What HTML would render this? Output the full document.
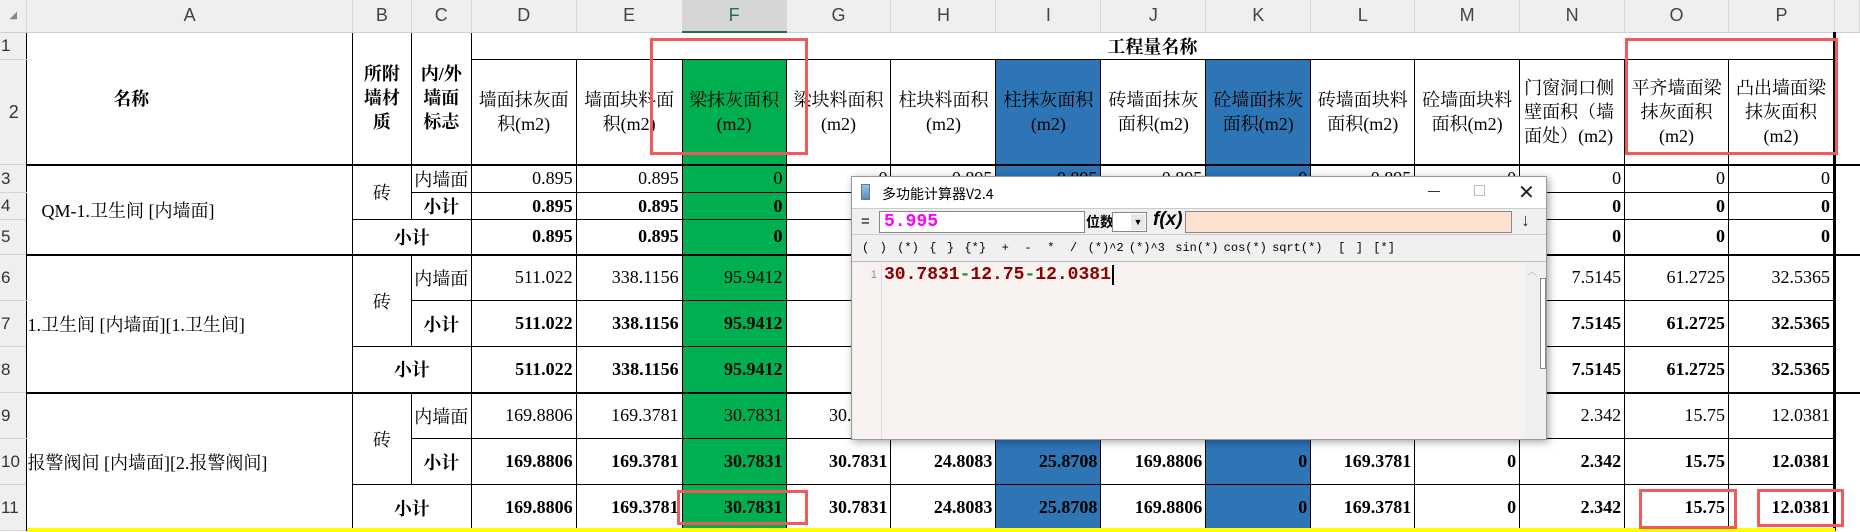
<!DOCTYPE html>
<html><head><meta charset="utf-8"><style>
*{box-sizing:border-box;margin:0;padding:0}
body{width:1860px;height:532px;overflow:hidden;background:#fff;position:relative;font-family:"Liberation Serif","Noto Serif CJK SC",serif;}
table{position:absolute;left:0;top:0;border-collapse:collapse;table-layout:fixed;}
td{border:1px solid #000;font-size:18px;text-align:right;padding:0 3px;white-space:nowrap;overflow:hidden;color:#000;}
td.rh{background:#efefef;color:#333;text-align:left;font-family:"Liberation Sans",sans-serif;font-size:17px;border:none;border-bottom:1px solid #d4d4d4;padding:0 0 0 1px;font-weight:normal}
tr.ch td{background:#efefef;color:#444;text-align:center;font-family:"Liberation Sans",sans-serif;font-size:18px;border:none;border-right:1px solid #d8d8d8;border-bottom:1px solid #d0d0d0}
tr.ch td.sel{background:#d6d6d6;border-bottom:2px solid #217346;color:#217346}
.c{text-align:center}.l{text-align:left}.b{font-weight:bold}
.g{background:#00b050}.bl{background:#2e75b6}
.hd td{text-align:center;white-space:nowrap;font-size:18px;line-height:24px}
.tb td{border-bottom:2px solid #000}
.red{position:absolute;border:3px solid #f05a5a}
#calc{position:absolute;left:851px;top:176px;width:696px;height:264px;background:#f0f0f0;border:1px solid #999;box-shadow:2px 2px 8px rgba(0,0,0,.35);font-family:"Liberation Sans","Noto Sans CJK SC",sans-serif}
.e{border:none;border-left:3px solid #000}
</style></head><body>
<table>
<colgroup><col style="width:27px"><col style="width:326px"><col style="width:59px"><col style="width:60px"><col style="width:105px"><col style="width:106px"><col style="width:104px"><col style="width:105px"><col style="width:105px"><col style="width:105px"><col style="width:105px"><col style="width:105px"><col style="width:104px"><col style="width:105px"><col style="width:105px"><col style="width:104px"><col style="width:106px"><col style="width:25px"></colgroup>
<tr class="ch" style="height:32px"><td style="font-size:10px;color:#888">◢</td><td>A</td><td>B</td><td>C</td><td>D</td><td>E</td><td class="sel">F</td><td>G</td><td>H</td><td>I</td><td>J</td><td>K</td><td>L</td><td>M</td><td>N</td><td>O</td><td>P</td><td></td></tr>
<tr style="height:26px"><td class="rh">1</td><td rowspan="2" class="c b" style="border-bottom:2px solid #000;padding-right:120px">名称</td><td rowspan="2" class="c b" style="line-height:24px;border-bottom:2px solid #000;padding:0">所附<br>墙材<br>质</td><td rowspan="2" class="c b" style="line-height:24px;border-bottom:2px solid #000;padding:0">内/外<br>墙面<br>标志</td><td colspan="13" class="c b">工程量名称</td><td class="e"></td></tr>
<tr class="hd tb" style="height:105px"><td class="rh" style="border-bottom:1px solid #d4d4d4">2</td><td>墙面抹灰面<br>积(m2)</td><td>墙面块料面<br>积(m2)</td><td class="g">梁抹灰面积<br>(m2)</td><td>梁块料面积<br>(m2)</td><td>柱块料面积<br>(m2)</td><td class="bl">柱抹灰面积<br>(m2)</td><td>砖墙面抹灰<br>面积(m2)</td><td class="bl">砼墙面抹灰<br>面积(m2)</td><td>砖墙面块料<br>面积(m2)</td><td>砼墙面块料<br>面积(m2)</td><td style="text-align:left;padding-left:4px">门窗洞口侧<br>壁面积（墙<br>面处）(m2)</td><td>平齐墙面梁<br>抹灰面积<br>(m2)</td><td>凸出墙面梁<br>抹灰面积<br>(m2)</td><td class="e"></td></tr>
<tr style="height:28px"><td class="rh">3</td><td rowspan="3" class="l" style="border-bottom:2px solid #000;padding-left:14px">QM-1.卫生间 [内墙面]</td><td rowspan="2" class="c">砖</td><td class="c" style="padding:0">内墙面</td><td>0.895</td><td>0.895</td><td class="g">0</td><td>0</td><td>0.895</td><td class="bl">0.895</td><td>0.895</td><td class="bl">0</td><td>0.895</td><td>0</td><td>0</td><td>0</td><td>0</td><td class="e"></td></tr>
<tr style="height:26px" class="b"><td class="rh">4</td><td class="c">小计</td><td>0.895</td><td>0.895</td><td class="g">0</td><td>0</td><td>0.895</td><td class="bl">0.895</td><td>0.895</td><td class="bl">0</td><td>0.895</td><td>0</td><td>0</td><td>0</td><td>0</td><td class="e"></td></tr>
<tr style="height:35px" class="b tb"><td class="rh" style="border-bottom:1px solid #d4d4d4">5</td><td colspan="2" class="c">小计</td><td>0.895</td><td>0.895</td><td class="g">0</td><td>0</td><td>0.895</td><td class="bl">0.895</td><td>0.895</td><td class="bl">0</td><td>0.895</td><td>0</td><td>0</td><td>0</td><td>0</td><td class="e"></td></tr>
<tr style="height:46px"><td class="rh">6</td><td rowspan="3" class="l" style="border-bottom:2px solid #000;padding-left:0">1.卫生间 [内墙面][1.卫生间]</td><td rowspan="2" class="c">砖</td><td class="c" style="padding:0">内墙面</td><td>511.022</td><td>338.1156</td><td class="g">95.9412</td><td>44.5</td><td>0</td><td class="bl">0</td><td>0</td><td class="bl">0</td><td>0</td><td>0</td><td>7.5145</td><td>61.2725</td><td>32.5365</td><td class="e"></td></tr>
<tr style="height:46px" class="b"><td class="rh">7</td><td class="c">小计</td><td>511.022</td><td>338.1156</td><td class="g">95.9412</td><td>44.5</td><td>0</td><td class="bl">0</td><td>0</td><td class="bl">0</td><td>0</td><td>0</td><td>7.5145</td><td>61.2725</td><td>32.5365</td><td class="e"></td></tr>
<tr style="height:46px" class="b tb"><td class="rh" style="border-bottom:1px solid #d4d4d4">8</td><td colspan="2" class="c">小计</td><td>511.022</td><td>338.1156</td><td class="g">95.9412</td><td>44.5</td><td>0</td><td class="bl">0</td><td>0</td><td class="bl">0</td><td>0</td><td>0</td><td>7.5145</td><td>61.2725</td><td>32.5365</td><td class="e"></td></tr>
<tr style="height:46px"><td class="rh">9</td><td rowspan="3" class="l" style="padding-left:0">报警阀间 [内墙面][2.报警阀间]</td><td rowspan="2" class="c">砖</td><td class="c" style="padding:0">内墙面</td><td>169.8806</td><td>169.3781</td><td class="g">30.7831</td><td>30.7831</td><td>24.8083</td><td class="bl">25.8708</td><td>169.8806</td><td class="bl">0</td><td>169.3781</td><td>0</td><td>2.342</td><td>15.75</td><td>12.0381</td><td class="e"></td></tr>
<tr style="height:46px" class="b"><td class="rh">10</td><td class="c">小计</td><td>169.8806</td><td>169.3781</td><td class="g">30.7831</td><td>30.7831</td><td>24.8083</td><td class="bl">25.8708</td><td>169.8806</td><td class="bl">0</td><td>169.3781</td><td>0</td><td>2.342</td><td>15.75</td><td>12.0381</td><td class="e"></td></tr>
<tr style="height:46px" class="b"><td class="rh">11</td><td colspan="2" class="c">小计</td><td>169.8806</td><td>169.3781</td><td class="g">30.7831</td><td>30.7831</td><td>24.8083</td><td class="bl">25.8708</td><td>169.8806</td><td class="bl">0</td><td>169.3781</td><td>0</td><td>2.342</td><td>15.75</td><td>12.0381</td><td class="e"></td></tr>
</table>
<div style="position:absolute;left:27px;top:528px;width:1808px;height:4px;background:#ffff00"></div>
<div class="red" style="left:650px;top:38px;width:158px;height:117px"></div>
<div class="red" style="left:1625px;top:38px;width:213px;height:117px"></div>
<div class="red" style="left:677px;top:490px;width:131px;height:35px"></div>
<div class="red" style="left:1639px;top:489px;width:98px;height:40px"></div>
<div class="red" style="left:1757px;top:489px;width:87px;height:38px"></div>

<div id="calc">
 <div style="height:31px;background:#fff;position:relative;font-size:14px">
  <div style="position:absolute;left:9px;top:7px;width:9px;height:16px;background:linear-gradient(#9cc3e8,#5a8bc0);border:1px solid #678"></div>
  <div style="position:absolute;left:30px;top:7px;font-family:'Noto Sans CJK SC',sans-serif">多功能计算器V2.4</div>
  <div style="position:absolute;left:576px;top:14px;width:12px;height:1px;background:#333"></div>
  <div style="position:absolute;left:622px;top:8px;width:11px;height:11px;border:1px solid #bbb"></div>
  <div style="position:absolute;left:666px;top:3px;font-size:20px;color:#222">✕</div>
 </div>
 <div style="height:26px;position:relative;border-top:1px solid #ccc">
  <div style="position:absolute;left:9px;top:4px;font-size:15px">=</div>
  <div style="position:absolute;left:27px;top:2px;width:206px;height:22px;background:#fff;border:1px solid #888;color:#ff00ff;font-family:'Liberation Mono',monospace;font-weight:bold;font-size:18px;padding-left:4px;line-height:20px">5.995</div>
  <div style="position:absolute;left:234px;top:3px;font-size:14px;font-weight:bold;font-family:'Noto Sans CJK SC',sans-serif">位数</div>
  <div style="position:absolute;left:260px;top:3px;width:35px;height:20px;background:#fff;border:1px solid #888"><div style="position:absolute;right:1px;top:1px;width:14px;height:16px;background:#e8e8e8;font-size:9px;text-align:center;line-height:16px">▼</div></div>
  <div style="position:absolute;left:301px;top:0px;font-size:19px;font-weight:bold;font-style:italic">f(x)</div>
  <div style="position:absolute;left:333px;top:2px;width:327px;height:22px;background:#fde0d0;border:1px solid #888"></div>
  <div style="position:absolute;left:661px;top:1px;width:25px;height:24px;font-size:18px;text-align:center;color:#333">↓</div>
 </div>
 <div style="height:28px;border-top:1px solid #ccc;border-bottom:1px solid #bbb;font-family:'Liberation Mono',monospace;font-size:12px;line-height:26px;padding-left:10px;white-space:pre;word-spacing:-2px">(  )  (*)  {  }  {*}   +   -   *   /  (*)^2 (*)^3  sin(*) cos(*) sqrt(*)   [  ]  [*]</div>
 <div style="position:absolute;left:1px;top:86px;width:29px;height:176px;background:#f7f2f0;border-right:1px solid #ddd;color:#88a;font-size:11px;text-align:right;padding:6px 4px 0 0">1</div>
 <div style="position:absolute;left:30px;top:86px;width:643px;height:176px;background:#f7f2f0;font-family:'Liberation Mono',monospace;font-weight:bold;font-size:18px;color:#8b0000;padding:2px 0 0 2px">30.7831<span style="color:#228b22">-</span>12.75<span style="color:#228b22">-</span>12.0381<span style="border-left:2px solid #000;margin-left:1px"></span></div>
 <div style="position:absolute;left:673px;top:86px;width:14px;height:176px;background:#efefef;color:#bbb;font-size:10px;text-align:center">︿</div>
 <div style="position:absolute;left:688px;top:101px;width:6px;height:91px;border:1px solid #888;background:#fff"></div>
</div>
</body></html>
